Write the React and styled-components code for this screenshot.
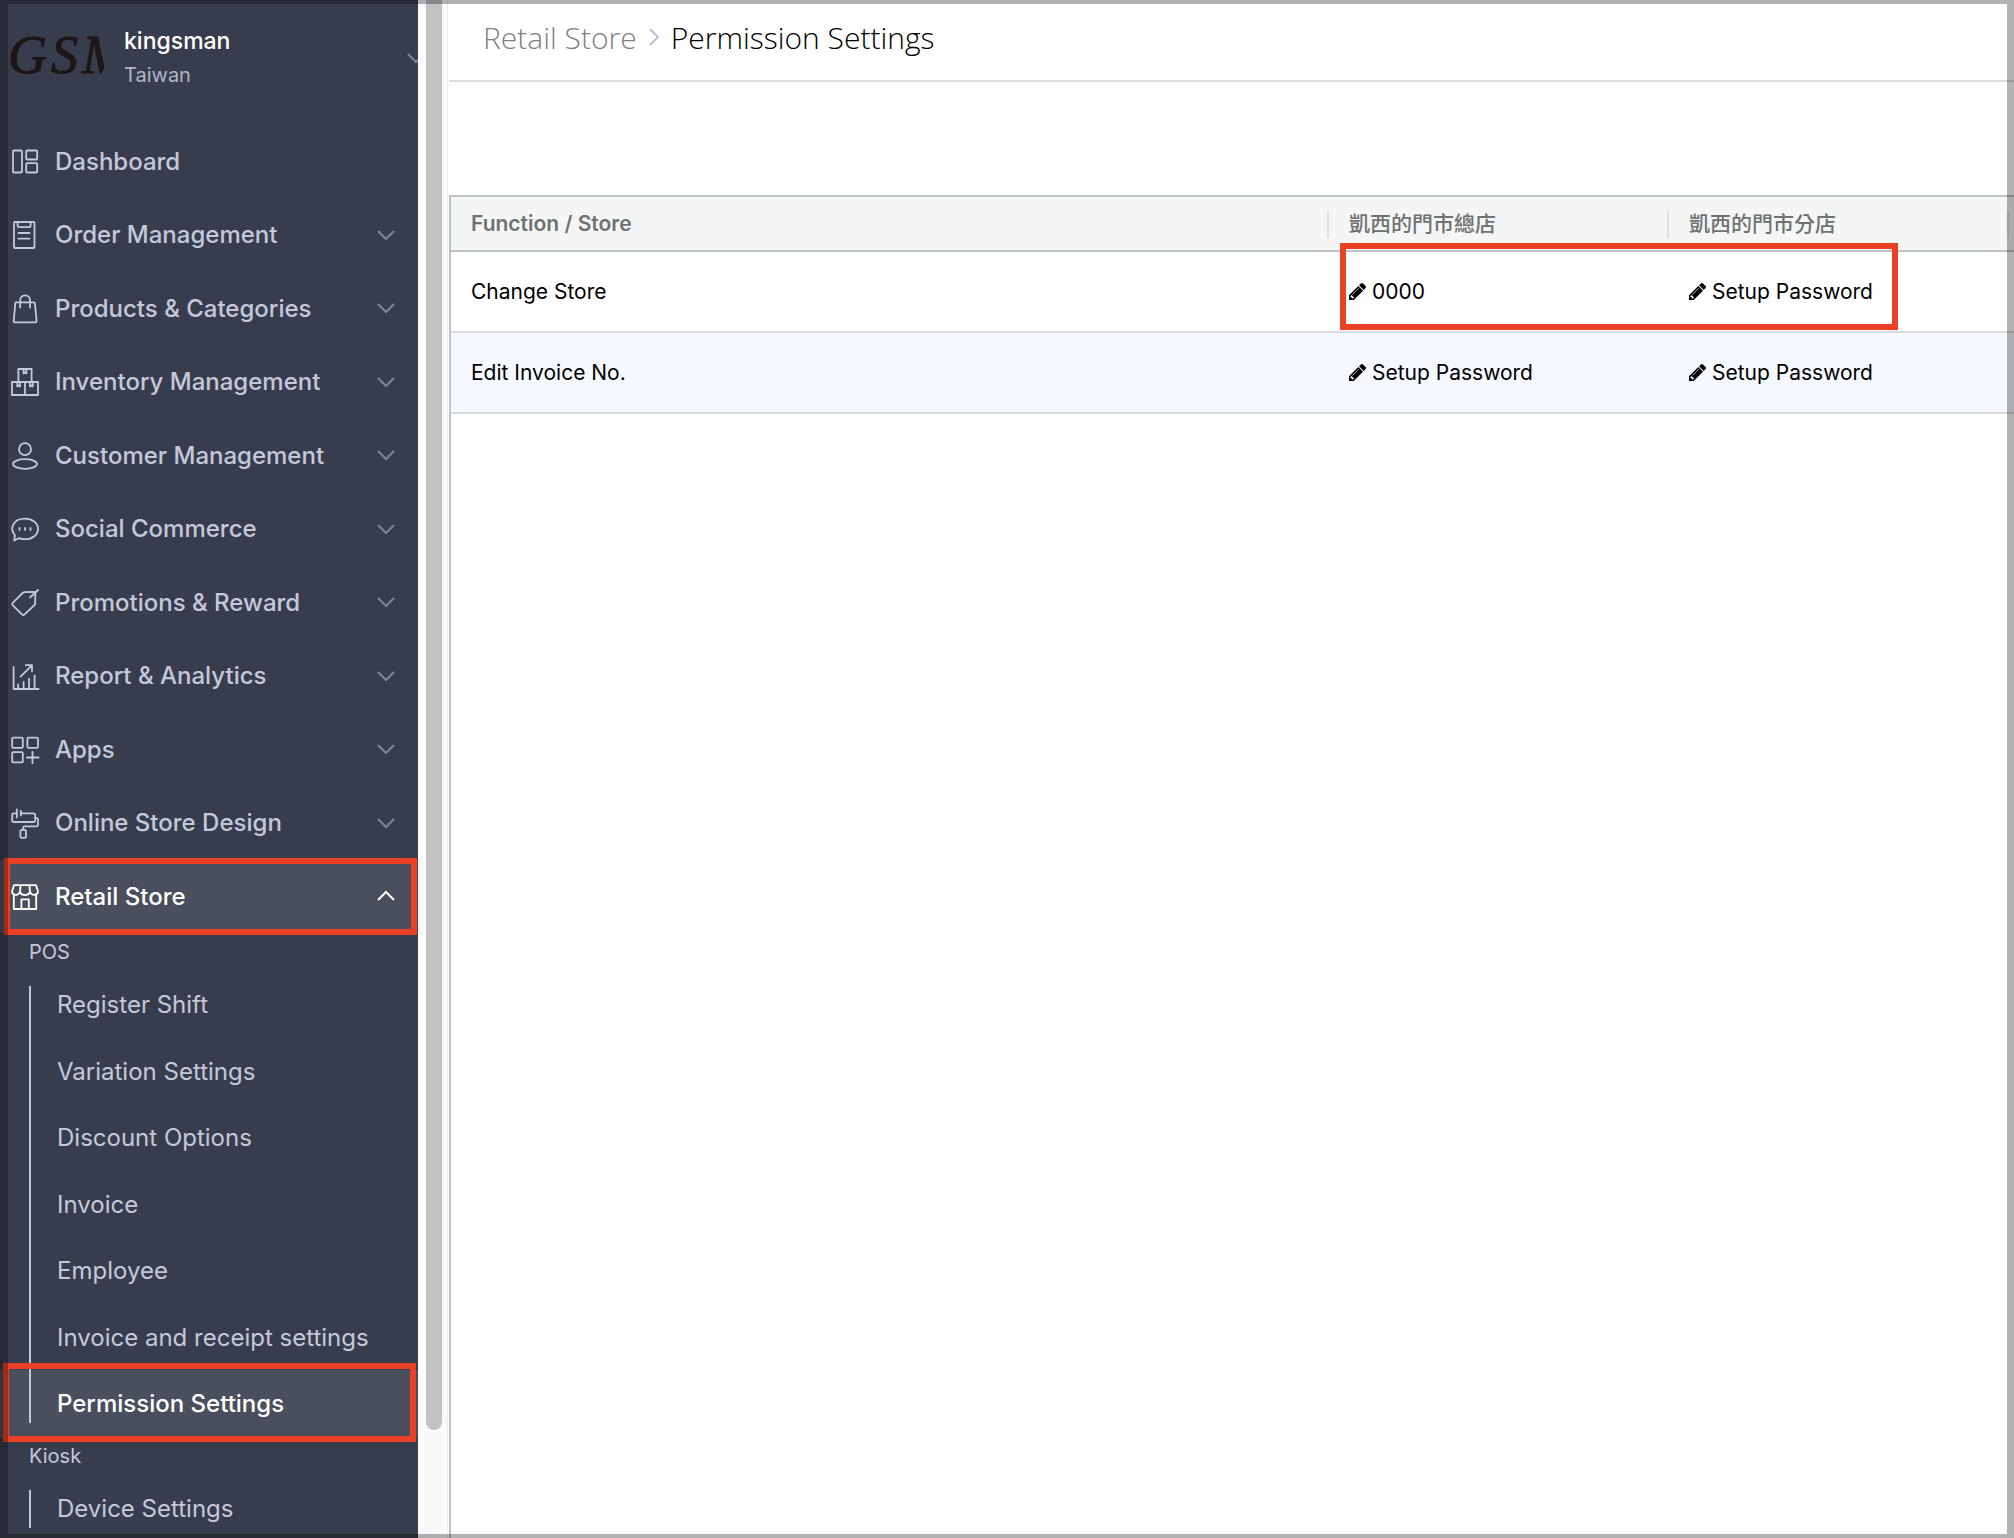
import styled, { createGlobalStyle } from 'styled-components';

const GlobalStyle = createGlobalStyle`
    *, *::before, *::after {
        box-sizing: border-box;
    }

    body {
        margin: 0;
        background: #fff;
        color: #000;
        font-family: Inter, 'Noto Sans CJK TC', sans-serif;
    }

    button {
        border: 0;
        padding: 0;
        background: none;
        color: inherit;
        font: inherit;
        text-align: left;
        cursor: pointer;
    }

    ul {
        margin: 0;
        padding: 0;
        list-style: none;
    }
`;

const ICONS = {
    dashboard: (
        <>
            <rect x="2" y="3.5" width="9" height="22" rx="1" />
            <rect x="15.2" y="3.5" width="11" height="9" rx="1" />
            <rect x="15.2" y="16.2" width="11" height="9.3" rx="1" />
        </>
    ),
    order: (
        <>
            <rect x="3" y="1" width="20.5" height="26" rx="1" />
            <path d="M6.6 1v3.6q0 1.6 1.6 1.6h9.8q1.6 0 1.6-1.6V1M7.5 12h11M7.5 17.6h11" />
        </>
    ),
    bag: (
        <>
            <path d="M5 8.4h18q.8 0 .9.8l1.7 18q0 1.2-1.2 1.2H3.8q-1.2 0-1.1-1.2l1.6-18q.1-.8.7-.8z" />
            <path d="M9.2 13.6V6.2a4.9 4.9 0 0 1 9.8 0v7.4" />
        </>
    ),
    boxes: (
        <>
            <path d="M7.4 13.6V1h13.2v12.6M1 14h26v13H1zM14 14v13" />
            <path d="M12.6 1v4.4l1.4-1 1.4 1V1M6.3 14v4.4l1.4-1 1.4 1V14M18.9 14v4.4l1.4-1 1.4 1V14" />
        </>
    ),
    customer: (
        <>
            <circle cx="14" cy="8.2" r="6" />
            <ellipse cx="14" cy="23" rx="12" ry="4.8" />
        </>
    ),
    chat: (
        <>
            <path d="M3.2 25.5l.7-5.2C-1.6 13.8 1.8 3.6 14 3.6c7.6 0 13 4.6 13 10.3S21.6 24.2 14 24.2c-2.4 0-4.2-.4-5.8-1.1z" />
            <path d="M8.5 12.9v2M14 12.9v2M19.5 12.9v2" />
        </>
    ),
    tag: (
        <>
            <path d="M13.4 4.2l9.7-.2q1.3 0 1.3 1.3l-.3 10.3q0 .8-.6 1.4l-9.9 9.4q-1.3 1.2-2.6 0l-9.2-9q-1.2-1.3 0-2.6L11.6 5q.8-.8 1.8-.8z" />
            <path d="M27 2l-8 7.5" />
        </>
    ),
    report: (
        <path d="M2.6 5v22h25M7.2 27v-4.6M12.6 27v-7M18 27V16.6M23.6 27V13.4M9.6 14.6L20.8 3.4M14.8 3.2h6.2v6.2" />
    ),
    apps: (
        <>
            <rect x="1.2" y="2.6" width="10.6" height="10.2" rx="1" />
            <rect x="16.4" y="2.6" width="10.6" height="10.2" rx="1" />
            <rect x="1.2" y="17.2" width="10.6" height="10.2" rx="1" />
            <path d="M21.5 16.8v11.4M15.8 22.5h11.8" />
        </>
    ),
    roller: (
        <>
            <path d="M5.8 4.4H3q-1.8 0-1.8 1.8v5Q1.2 13 3 13h19.4q1.8 0 1.8-1.8v-5q0-1.8-1.8-1.8H9.8" />
            <path d="M5.8.4v8M9.8 1.8v4.6M24.2 9.2h1.6q1.2 0 1.2 1.2v5.2q0 1.8-1.8 1.8H13.4q-1.2 0-1.2 1.2v2" />
            <rect x="9.4" y="20.8" width="5.6" height="8" rx="1.6" />
        </>
    ),
    store: (
        <>
            <path d="M3 3.2h22l2 6c0 4.2-6.2 5-8 1-1.8 4-8.2 4-10 0-1.8 4-8 3.2-8-1zM9.6 3.2L9 10.2M18.400 3.2l.6 7" />
            <path d="M2.8 12.8v14.2h22.4V12.8M10.4 27v-9.6h7.4V27" />
        </>
    ),
};

const MENU = [
    { label: 'Dashboard', icon: 'dashboard', leaf: true },
    { label: 'Order Management', icon: 'order' },
    { label: 'Products & Categories', icon: 'bag' },
    { label: 'Inventory Management', icon: 'boxes' },
    { label: 'Customer Management', icon: 'customer' },
    { label: 'Social Commerce', icon: 'chat' },
    { label: 'Promotions & Reward', icon: 'tag' },
    { label: 'Report & Analytics', icon: 'report' },
    { label: 'Apps', icon: 'apps' },
    { label: 'Online Store Design', icon: 'roller' },
    { label: 'Retail Store', icon: 'store', open: true },
];

const SECTIONS = [
    {
        title: 'POS',
        items: [
            'Register Shift',
            'Variation Settings',
            'Discount Options',
            'Invoice',
            'Employee',
            'Invoice and receipt settings',
            'Permission Settings',
        ],
    },
    { title: 'Kiosk', items: ['Device Settings'] },
];

const STORES = ['凱西的門市總店', '凱西的門市分店'];

const ROWS = [
    { name: 'Change Store', values: ['0000', 'Setup Password'], marked: true },
    { name: 'Edit Invoice No.', values: ['Setup Password', 'Setup Password'] },
];

export default function App() {
    return (
        <Page>
            <GlobalStyle />
            <Sidebar />
            <ScrollTrack>
                <ScrollThumb />
            </ScrollTrack>
            <Main>
                <Breadcrumb aria-label="Breadcrumb">
                    <Crumb href="#retail-store">Retail Store</Crumb>
                    <CrumbArrow viewBox="0 0 10 18" aria-hidden="true">
                        <path d="M1 1l8 8-8 8" />
                    </CrumbArrow>
                    <CurrentCrumb>Permission Settings</CurrentCrumb>
                </Breadcrumb>
                <TableArea>
                    <PermissionTable />
                </TableArea>
            </Main>
            <Frame />
        </Page>
    );
}

function Sidebar() {
    return (
        <SidebarWrapper>
            <Account>
                <AccountLogo>
                    <span>G</span>
                    <span>S</span>
                    <span>M</span>
                </AccountLogo>
                <AccountText>
                    <AccountName>kingsman</AccountName>
                    <AccountRegion>Taiwan</AccountRegion>
                </AccountText>
                <Chevron />
            </Account>
            <nav>
                <ul>
                    {MENU.map(item => (
                        <MenuItem key={item.label}>
                            <MenuButton type="button" $open={item.open} aria-expanded={item.leaf ? undefined : !!item.open}>
                                <MenuIcon viewBox="0 0 28 28" aria-hidden="true">{ICONS[item.icon]}</MenuIcon>
                                <MenuLabel>{item.label}</MenuLabel>
                                {!item.leaf && <Chevron up={item.open} />}
                            </MenuButton>
                            {item.open && <MenuHighlight />}
                        </MenuItem>
                    ))}
                </ul>
                {SECTIONS.map(section => (
                    <section key={section.title}>
                        <SectionTitle>{section.title}</SectionTitle>
                        <SubMenu>
                            {section.items.map(item => {
                                const active = item === 'Permission Settings';
                                return (
                                    <SubItem key={item}>
                                        <SubLink href="#settings" $active={active}>{item}</SubLink>
                                        {active && <SubHighlight />}
                                    </SubItem>
                                );
                            })}
                        </SubMenu>
                    </section>
                ))}
            </nav>
        </SidebarWrapper>
    );
}

function Chevron({ up }) {
    return (
        <ChevronIcon viewBox="0 0 18 12" $up={up} aria-hidden="true">
            <path d={up ? 'M1 10l8-8 8 8' : 'M1 2l8 8 8-8'} />
        </ChevronIcon>
    );
}

function PermissionTable() {
    return (
        <Table>
            <colgroup>
                <col />
                <StoreCol />
                <StoreCol />
                <EndCol />
            </colgroup>
            <thead>
                <tr>
                    <HeadCell scope="col">Function / Store</HeadCell>
                    {STORES.map(store => <StoreHeadCell scope="col" key={store}>{store}</StoreHeadCell>)}
                    <EndCell />
                </tr>
            </thead>
            <tbody>
                {ROWS.map(row => (
                    <Row key={row.name}>
                        <Cell>{row.name}</Cell>
                        {row.values.map((value, i) => (
                            <Cell key={i}>
                                <EditButton type="button">
                                    <Pencil viewBox="128 149 1515 1515" aria-hidden="true">
                                        <path d="M491 1536l91-91-235-235-91 91v107h128v128h107zm523-928q0-22-22-22-10 0-17 7l-542 542q-7 7-7 17 0 22 22 22 10 0 17-7l542-542q7-7 7-17zm-54-192l416 416-832 832h-416v-416zm683 96q0 53-37 90l-166 166-416-416 166-165q36-38 90-38 53 0 91 38l235 234q37 39 37 91z" />
                                    </Pencil>
                                    {value}
                                </EditButton>
                                {row.marked && i === 0 && <CellHighlight />}
                            </Cell>
                        ))}
                        <EndCell />
                    </Row>
                ))}
            </tbody>
        </Table>
    );
}

const Page = styled.div`
    position: relative;
    display: flex;
    height: 100vh;
    overflow: hidden;
`;

// dimmed edge round the whole page
const Frame = styled.div`
    position: absolute;
    inset: 0;
    z-index: 5;
    border: solid rgba(0, 0, 0, 0.3);
    border-width: 4px 7px 4px 8px;
    pointer-events: none;
`;

const SidebarWrapper = styled.aside`
    flex: 0 0 418px;
    overflow: hidden;
    background: #383d4d;
    color: #c4c9da;
`;

const Account = styled.header`
    display: flex;
    align-items: center;
    height: 125px;
    padding: 0 0 10px 8px;
`;

const AccountLogo = styled.div`
    display: flex;
    flex: none;
    gap: 4px;
    width: 96px;
    margin-bottom: 6px;
    overflow: hidden;
    color: #1c1716;
    font: italic 54px/64px 'Liberation Serif', serif;
    -webkit-text-stroke: 1px #1c1716;
`;

const AccountText = styled.div`
    flex: none;
    width: 303px;
    padding-left: 20px;
`;

const AccountName = styled.div`
    color: #fff;
    font-size: 23px;
    font-weight: 500;
    line-height: 34px;
`;

const AccountRegion = styled.div`
    color: #b0b5c5;
    font-size: 20px;
    line-height: 34px;
`;

const ChevronIcon = styled.svg`
    flex: none;
    width: 18px;
    height: 12px;
    fill: none;
    stroke: ${p => p.$up ? '#fff' : '#7e849a'};
    stroke-width: 2;
`;

const MenuItem = styled.li`
    position: relative;
    height: 73px;

    &:nth-child(even) {
        height: 74px;
    }
`;

const MenuButton = styled.button`
    display: flex;
    align-items: center;
    width: 100%;
    height: 100%;
    padding: 0 23px 1px 11px;
    background: ${p => p.$open ? '#4a4f5d' : 'none'};
    color: ${p => p.$open ? '#fff' : 'inherit'};
`;

const MenuIcon = styled.svg`
    flex: none;
    width: 28px;
    height: 28px;
    margin-right: 16px;
    overflow: visible;
    fill: none;
    stroke: currentColor;
    stroke-width: 1.8;
    stroke-linecap: round;
    stroke-linejoin: round;
`;

const MenuLabel = styled.span`
    flex: 1;
    font-size: 24px;
    font-weight: 500;
`;

const Highlight = styled.div`
    position: absolute;
    z-index: 2;
    border: 6px solid #ea4025;
    pointer-events: none;
`;

const MenuHighlight = styled(Highlight)`
    inset: -2px 1px -2px 4px;
`;

const SubHighlight = styled(Highlight)`
    inset: -7px 2px -5px 3px;
`;

const CellHighlight = styled(Highlight)`
    inset: -9px -229px 1px 11px;
`;

const SectionTitle = styled.h2`
    margin: 0;
    padding-left: 29px;
    font-size: 20px;
    font-weight: 400;
    line-height: 38px;
`;

const SubMenu = styled.ul`
    position: relative;

    &::before {
        content: '';
        position: absolute;
        z-index: 1;
        top: 15px;
        bottom: 14px;
        left: 29px;
        width: 2px;
        background: #c4c9da;
    }
`;

const SubItem = styled.li`
    position: relative;
    height: 67px;

    &:nth-child(even) {
        height: 66px;
    }
`;

const SubLink = styled.a`
    display: flex;
    align-items: center;
    height: 100%;
    padding-left: 57px;
    background: ${p => p.$active ? '#4a4f5d' : 'none'};
    color: ${p => p.$active ? '#fff' : 'inherit'};
    font-size: 24px;
    font-weight: ${p => p.$active ? 500 : 400};
    text-decoration: none;
`;

const ScrollTrack = styled.div`
    flex: 0 0 30px;
    padding: 0 5px 0 8px;
    border-right: 1px solid #ededed;
    background: #fafafa;
`;

const ScrollThumb = styled.div`
    width: 16px;
    height: 93%;
    border-radius: 0 0 8px 8px;
    background: #c2c2c2;
`;

const Main = styled.main`
    flex: 1;
    display: flex;
    flex-direction: column;
    min-width: 0;
    padding-left: 1px;
`;

const Breadcrumb = styled.nav`
    display: flex;
    flex: none;
    align-items: center;
    height: 82px;
    padding: 0 34px 6px;
    border-bottom: 2px solid #ddd;
    font-family: 'Open Sans', sans-serif;
    font-size: 30px;
    font-weight: 300;
`;

const Crumb = styled.a`
    color: #808080;
    text-decoration: none;
`;

const CrumbArrow = styled.svg`
    width: 10px;
    height: 18px;
    margin: 0 12px;
    fill: none;
    stroke: #b9c2cf;
    stroke-width: 2;
`;

const CurrentCrumb = styled.span`
    color: #000;
`;

const TableArea = styled.div`
    flex: 1;
    margin-top: 113px;
    border-left: 2px solid #bdc3c7;
`;

const Table = styled.table`
    width: 100%;
    table-layout: fixed;
    border-collapse: separate;
    border-spacing: 0;
    font-size: 21px;
    line-height: 28px;
`;

const StoreCol = styled.col`
    width: 340px;
`;

const EndCol = styled.col`
    width: 5px;
`;

const HeadCell = styled.th`
    position: relative;
    height: 57px;
    padding: 0 20px;
    border: solid #bdc3c7;
    border-width: 2px 0;
    background: #f4f6f6;
    color: #6f7271;
    font-weight: 600;
    text-align: left;

    &::after {
        content: '';
        position: absolute;
        top: 14px;
        right: 0;
        bottom: 12px;
        width: 2px;
        background: #dcdfe0;
    }
`;

const StoreHeadCell = styled(HeadCell)`
    font-weight: 500;
`;

const Row = styled.tr`
    &:nth-child(even) {
        background: #f5f8fe;
    }
`;

const Cell = styled.td`
    position: relative;
    height: 81px;
    padding: 0 20px;
    border-bottom: 2px solid #d9dcdf;
`;

const EndCell = styled.td`
    padding: 0;
    border-bottom: 2px solid #d9dcdf;

    thead & {
        border: solid #bdc3c7;
        border-width: 2px 0;
        background: #f4f6f6;
    }
`;

const EditButton = styled.button`
    display: flex;
    align-items: center;
    gap: 6px;
`;

const Pencil = styled.svg`
    width: 17px;
    height: 17px;
    fill: currentColor;
`;
